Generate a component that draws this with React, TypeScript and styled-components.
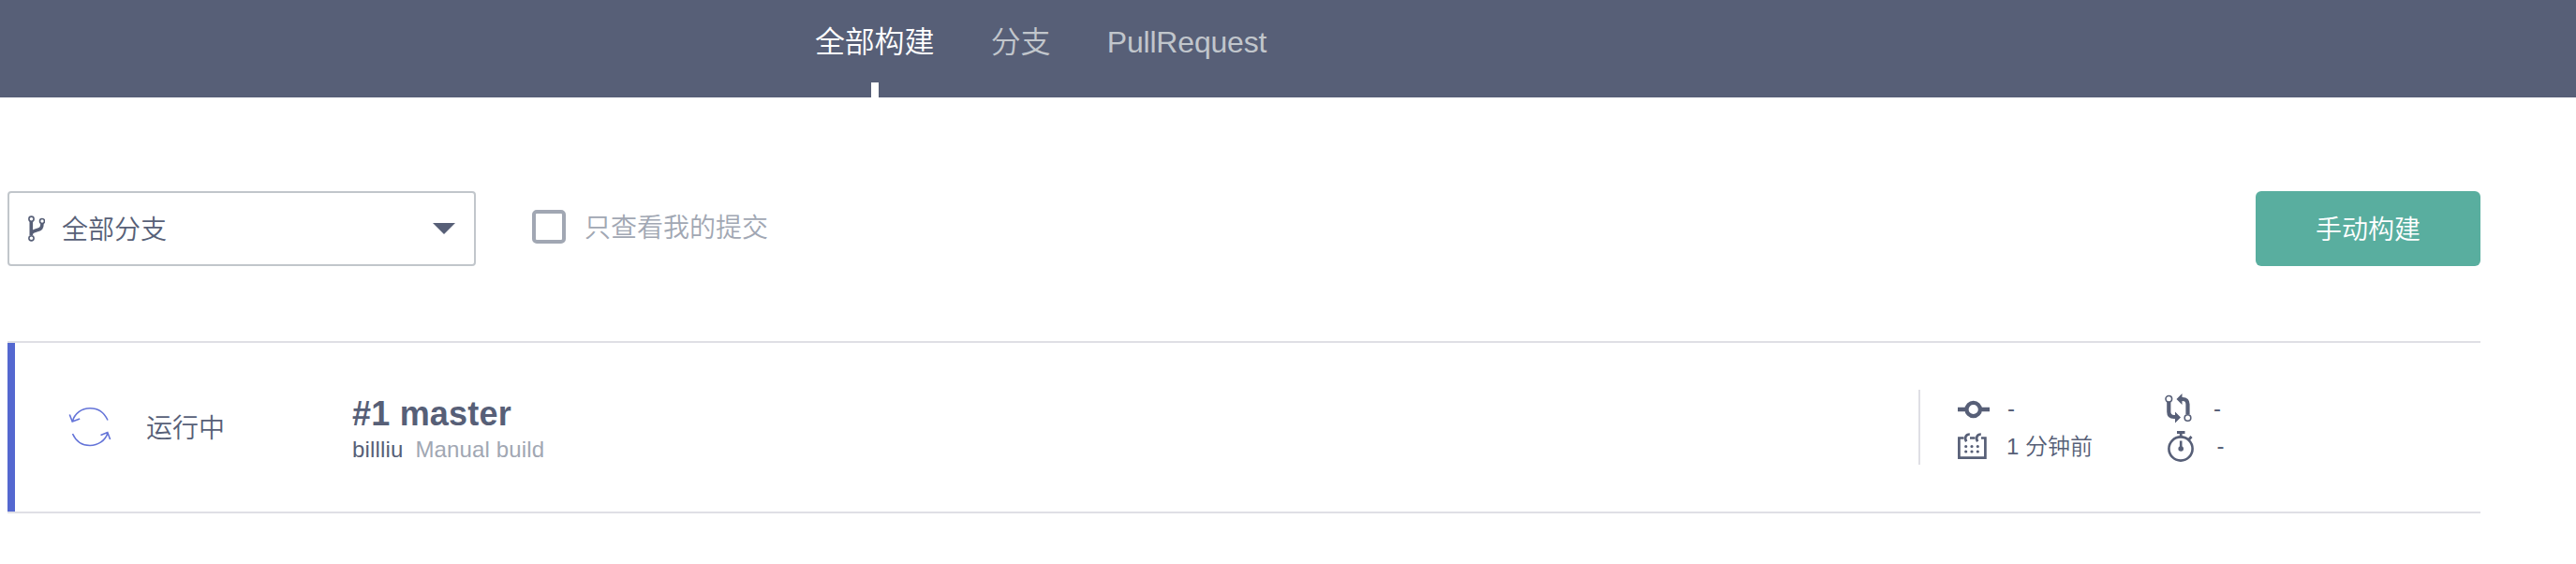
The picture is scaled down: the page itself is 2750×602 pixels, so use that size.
import React from 'react';
import styled, { createGlobalStyle } from 'styled-components';

const ink = '#575f77';
const muted = '#a1a7b3';

const GlobalStyle = createGlobalStyle`
  * { box-sizing: border-box; }
  body {
    margin: 0;
    background: #fff;
    color: ${ink};
    font-family: "Liberation Sans", "Noto Sans CJK SC", sans-serif;
    font-weight: 350;
  }
`;

const Header = styled.header`
  display: flex;
  gap: 60.5px;
  height: 104px;
  padding-left: 870px;
  background: #575f77;
`;

const Tab = styled.a<{ $active?: boolean }>`
  position: relative;
  height: 104px;
  font-size: 32px;
  letter-spacing: -0.2px;
  line-height: 90px;
  white-space: nowrap;
  color: ${(p) => (p.$active ? '#fff' : '#c1c6cc')};
  &::after {
    content: '';
    display: ${(p) => (p.$active ? 'block' : 'none')};
    position: absolute;
    left: 60px;
    bottom: 0;
    width: 8px;
    height: 16px;
    background: #fff;
  }
`;

const Main = styled.main`
  width: 2640px;
  margin-left: 8px;
  padding-top: 100px;
`;

const Toolbar = styled.div`
  display: flex;
  align-items: center;
  height: 80px;
  margin-bottom: 80px;
  font-size: 28px;
  line-height: 40px;
`;

const BranchSelect = styled.div`
  display: flex;
  align-items: center;
  width: 500px;
  height: 80px;
  padding: 0 20px;
  border: 2px solid #c1c6cb;
  border-radius: 4px;
`;

const SelectLabel = styled.span`
  flex: 1;
  margin-left: 18px;
  padding-top: 4px;
`;

const Check = styled.label`
  display: flex;
  align-items: center;
  gap: 20px;
  margin: 0 auto 4px 60px;
  color: ${muted};
`;

const CheckText = styled.span`
  padding-top: 3px;
`;

const CheckBox = styled.span`
  width: 36px;
  height: 36px;
  border: 4px solid ${muted};
  border-radius: 5px;
`;

const BuildButton = styled.button`
  width: 240px;
  height: 80px;
  padding: 3px 0 0;
  border: 0;
  border-radius: 6px;
  background: #59ae9f;
  color: #fff;
  font: inherit;
`;

const BuildRow = styled.article`
  display: flex;
  align-items: center;
  height: 184px;
  border: solid #dfdfe5;
  border-width: 2px 0;
`;

const StatusBar = styled.div`
  width: 8px;
  height: 180px;
  background: #5468d0;
`;

const Status = styled.div`
  display: flex;
  align-items: center;
  gap: 37px;
  width: 360px;
  padding-left: 57px;
  font-size: 28px;
  line-height: 40px;
`;

const StatusText = styled.span`
  padding-top: 3px;
`;

const Summary = styled.div`
  width: 1672px;
  padding-top: 4px;
`;

const Title = styled.h2`
  margin: 0;
  font-size: 36px;
  font-weight: 700;
  letter-spacing: 0.2px;
  line-height: 44px;
`;

const Byline = styled.div`
  display: flex;
  gap: 13px;
  font-size: 24px;
  letter-spacing: 0.15px;
  line-height: 32px;
`;

const Message = styled.span`
  color: ${muted};
`;

const Meta = styled.div`
  display: grid;
  grid-template-columns: 221px 120px;
  grid-template-rows: 40px 40px;
  height: 80px;
  padding-left: 40px;
  border-left: 2px solid #dfdfe5;
  font-size: 24px;
  line-height: 40px;
`;

const MetaItem = styled.div<{ $gap: number; $indent?: number }>`
  display: flex;
  align-items: center;
  gap: ${(p) => p.$gap}px;
  padding-left: ${(p) => p.$indent ?? 0}px;
  white-space: nowrap;
`;

const TimeText = styled.span`
  padding-top: 2px;
`;

const BranchIcon = () => (
  <svg width="18" height="28" viewBox="0 0 18 28" fill="none" stroke={ink}>
    <path d="M3.3 6v15M15 8.500c0 5-1.500 6-5 7-3 .9-5.500 1.600-6.500 3.500" strokeWidth="3.600" />
    <g fill="#fff" strokeWidth="1.600">
      <circle cx="3.500" cy="3.700" r="2.600" />
      <circle cx="15" cy="6" r="2.500" />
      <circle cx="3.500" cy="24.300" r="2.600" />
    </g>
  </svg>
);

const Caret = () => (
  <svg width="24" height="12" viewBox="0 0 24 12">
    <path d="M0 0h24L12 12z" fill={ink} />
  </svg>
);

const RunningIcon = () => (
  <svg width="46" height="44" viewBox="0 0 46 44" fill="none" stroke="#6474d8" strokeWidth="1.600">
    <path d="M42 14.500C37.500 4.500 30 1.700 23 1.700 14 1.700 6.500 7.500 4.500 15.500M1.300 8.500l2.900 7.500 8-3" />
    <path d="M4.500 29C8.500 38 15.500 41.500 23 41.500c8.500 0 16.500-5 19-13.500M34.500 30.500l7.300-3 2.800 7.500" />
  </svg>
);

const CommitIcon = () => (
  <svg width="34" height="22" viewBox="0 0 34 22" fill="none" stroke={ink}>
    <path d="M0 12h9M25 12h9" strokeWidth="4.600" />
    <circle cx="16.700" cy="12" r="7.200" strokeWidth="4.200" />
  </svg>
);

const CalendarIcon = () => (
  <svg width="31" height="29" viewBox="0 0 31 29" fill="none" stroke={ink}>
    <path d="M6.500 5.500H1.400v21.200h28V5.500H25M13 5.500h5.500" strokeWidth="2.700" />
    <path d="M9.200 9.200C6.800 5.500 8.500 1.500 12.800 1.500M21.200 9.200C18.800 5.500 20.500 1.500 24.800 1.500" strokeWidth="2.700" />
    <path d="M8.700 14.500h.01M15 14.500h.01M21.300 14.500h.01M8.700 20h.01M15 20h.01M21.300 20h.01" strokeWidth="3.200" strokeLinecap="round" />
  </svg>
);

const PullIcon = () => (
  <svg width="29" height="32" viewBox="0 0 29 32" fill="none" stroke={ink}>
    <path d="M4.300 8v11.500q0 5.500 5.500 5.500H12M24.500 22V11.500q0-5.500-5.500-5.500H17.500" strokeWidth="4.200" />
    <path d="M11 19.500v12l6-6zM18.500 0v12l-6-6z" fill={ink} stroke="none" />
    <g fill="#fff" strokeWidth="1.600">
      <circle cx="4.300" cy="5.800" r="3.300" />
      <circle cx="24.500" cy="26" r="3.300" />
    </g>
  </svg>
);

const StopwatchIcon = () => (
  <svg width="29" height="33" viewBox="0 0 29 33" fill="none" stroke={ink}>
    <circle cx="14" cy="19" r="12.600" strokeWidth="2.600" />
    <path d="M10 1.500h8.500M14.200 1.500V7M22.500 9.500l3-3.500" strokeWidth="2.800" />
    <path d="M14.200 10.500v9" strokeWidth="2.600" />
    <circle cx="14.200" cy="19" r="2.800" fill={ink} stroke="none" />
  </svg>
);

export default function App() {
  return (
    <>
      <GlobalStyle />
      <Header>
        <Tab $active>全部构建</Tab>
        <Tab>分支</Tab>
        <Tab>PullRequest</Tab>
      </Header>
      <Main>
        <Toolbar>
          <BranchSelect>
            <BranchIcon />
            <SelectLabel>全部分支</SelectLabel>
            <Caret />
          </BranchSelect>
          <Check>
            <CheckBox />
            <CheckText>只查看我的提交</CheckText>
          </Check>
          <BuildButton>手动构建</BuildButton>
        </Toolbar>
        <BuildRow>
          <StatusBar />
          <Status>
            <RunningIcon />
            <StatusText>运行中</StatusText>
          </Status>
          <Summary>
            <Title>#1 master</Title>
            <Byline>
              <span>billliu</span>
              <Message>Manual build</Message>
            </Byline>
          </Summary>
          <Meta>
            <MetaItem $gap={19}><CommitIcon />-</MetaItem>
            <MetaItem $gap={23}><PullIcon />-</MetaItem>
            <MetaItem $gap={21}><CalendarIcon /><TimeText>1 分钟前</TimeText></MetaItem>
            <MetaItem $gap={23.5} $indent={3}><StopwatchIcon />-</MetaItem>
          </Meta>
        </BuildRow>
      </Main>
    </>
  );
}
